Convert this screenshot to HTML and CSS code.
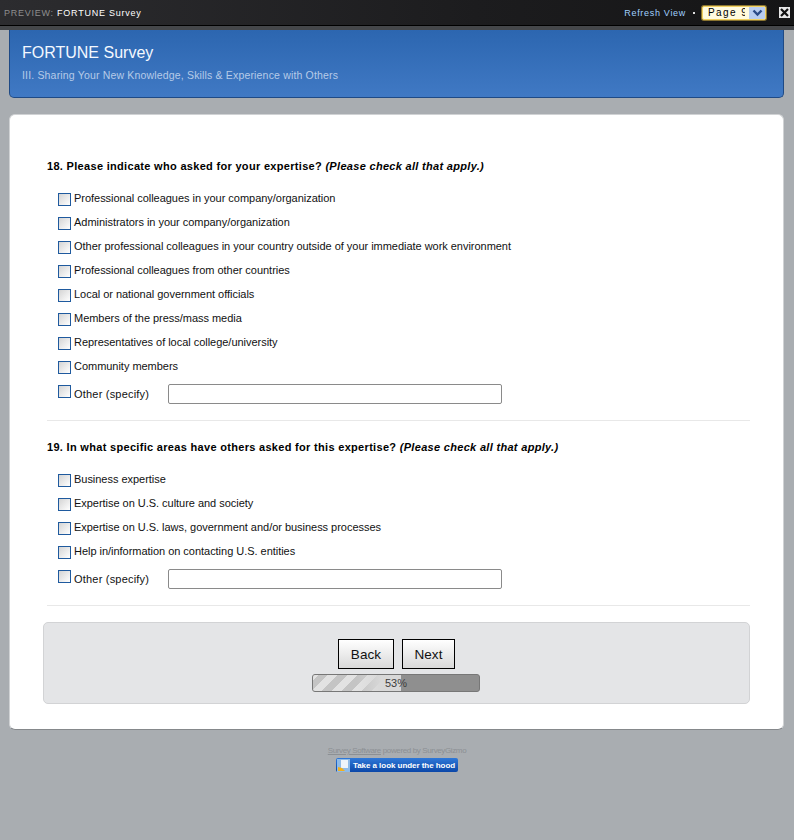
FILE: index.html
```html
<!DOCTYPE html>
<html>
<head>
  <title>FORTUNE Survey</title>
  <meta http-equiv="Content-Type" content="text/html; charset=utf-8" />
  <link rel="stylesheet" href="styles.css">
</head>
<body>
  <div class="preview-bar">
    <div class="preview-title"><span class="preview-label">PREVIEW:</span> FORTUNE Survey</div>
    <div class="preview-tools">
      <a href="#" class="refresh-link">Refresh View</a>
      <span class="dot"></span>
      <div class="page-select">
        <span class="page-text">Page 9</span>
        <span class="page-arrow">
          <svg width="11" height="8" viewBox="0 0 11 8"><path d="M1.5 1.5 L5.5 5.5 L9.5 1.5" fill="none" stroke="#2b4a86" stroke-width="2.4"/></svg>
        </span>
      </div>
      <span class="close-btn">
        <svg width="9" height="9" viewBox="0 0 9 9"><path d="M1 1 L8 8 M8 1 L1 8" fill="none" stroke="#111" stroke-width="2.2"/></svg>
      </span>
    </div>
  </div>

  <div class="survey-header">
    <h1>FORTUNE Survey</h1>
    <p>III. Sharing Your New Knowledge, Skills &amp; Experience with Others</p>
  </div>

  <div class="survey-card">
    <div class="question">
      <h2>18. Please indicate who asked for your expertise? <em>(Please check all that apply.)</em></h2>
      <label class="option"><span class="box"></span>Professional colleagues in your company/organization</label>
      <label class="option"><span class="box"></span>Administrators in your company/organization</label>
      <label class="option"><span class="box"></span>Other professional colleagues in your country outside of your immediate work environment</label>
      <label class="option"><span class="box"></span>Professional colleagues from other countries</label>
      <label class="option"><span class="box"></span>Local or national government officials</label>
      <label class="option"><span class="box"></span>Members of the press/mass media</label>
      <label class="option"><span class="box"></span>Representatives of local college/university</label>
      <label class="option"><span class="box"></span>Community members</label>
      <div class="option other"><span class="box"></span><span class="other-label">Other (specify)</span><input type="text" class="other-input"></div>
    </div>

    <div class="question">
      <h2>19. In what specific areas have others asked for this expertise? <em>(Please check all that apply.)</em></h2>
      <label class="option"><span class="box"></span>Business expertise</label>
      <label class="option"><span class="box"></span>Expertise on U.S. culture and society</label>
      <label class="option"><span class="box"></span>Expertise on U.S. laws, government and/or business processes</label>
      <label class="option"><span class="box"></span>Help in/information on contacting U.S. entities</label>
      <div class="option other"><span class="box"></span><span class="other-label">Other (specify)</span><input type="text" class="other-input"></div>
    </div>

    <div class="nav-panel">
      <div class="nav-buttons">
        <button class="nav-btn back-btn">Back</button>
        <button class="nav-btn next-btn">Next</button>
      </div>
      <div class="progress">
        <div class="progress-fill" style="width: 53%;"></div>
        <span class="progress-text">53%</span>
      </div>
    </div>
  </div>

  <div class="footer">
    <div class="footer-text"><a href="#">Survey Software</a> powered by SurveyGizmo</div>
    <a href="#" class="hood-badge">
      <svg width="13" height="13" viewBox="0 0 13 13"><rect width="13" height="13" fill="#8fbbe8"/><path d="M4 1h7v8H4z" fill="#eef4fb"/><path d="M1 12 L1 8 L5 9 L8 12 Z" fill="#f2b01e"/></svg>
      Take a look under the hood
    </a>
  </div>
</body>
</html>
```

FILE: styles.css
```css
body {
  font-family: "Liberation Sans", Arial, sans-serif;
  font-size: 11px;
  background-color: #a9adb1;
  margin: 0;
  padding: 0;
  color: #111;
}

.preview-bar {
  height: 25px;
  display: flex;
  justify-content: space-between;
  align-items: center;
  padding: 0 4px;
  background: linear-gradient(90deg, #2c2c2f, #1c1c1e 60%, #151516);
  border-bottom: 1px solid #000;
  box-shadow: 0 4px 0 #45474a;
  position: relative;
}

.preview-title {
  font-size: 9px;
  letter-spacing: 0.75px;
  color: #fff;
}

.preview-label {
  color: #8e8e8e;
}

.preview-tools {
  display: flex;
  align-items: center;
}

.refresh-link {
  font-size: 9px;
  letter-spacing: 0.7px;
  color: #a0d0ff;
  text-decoration: none;
}

.dot {
  width: 2px;
  height: 2px;
  background-color: #ddd;
  margin: 0 7px 0 7px;
}

.page-select {
  width: 64px;
  height: 14px;
  display: flex;
  align-items: center;
  justify-content: space-between;
  background-color: #fffbe0;
  border: 1px solid #f0d060;
  box-shadow: 0 0 0 1px #8a7430;
  border-radius: 2px;
  margin-right: 13px;
  padding-left: 5px;
  box-sizing: border-box;
  overflow: hidden;
}

.page-text {
  font-size: 10px;
  letter-spacing: 1.4px;
  color: #000;
  width: 37px;
  overflow: hidden;
  white-space: nowrap;
}

.page-arrow {
  width: 16px;
  height: 12px;
  background-color: #b8cdf0;
  display: flex;
  align-items: center;
  justify-content: center;
}

.close-btn {
  width: 11px;
  height: 11px;
  background-color: #e8e8e8;
  display: flex;
  align-items: center;
  justify-content: center;
}

.survey-header {
  margin: 4px 10px 0 9px;
  height: 68px;
  padding-left: 12px;
  box-sizing: border-box;
  background: linear-gradient(#2c66b0, #4079c4);
  border: 1px solid #1f4a85;
  border-top: none;
  border-radius: 0 0 5px 5px;
  color: #f4f8ff;
}

.survey-header h1 {
  margin: 0;
  padding-top: 14px;
  font-size: 16px;
  font-weight: normal;
}

.survey-header p {
  margin: 7px 0 0;
  font-size: 10.5px;
  letter-spacing: 0.17px;
  color: #b6cbe8;
}

.survey-card {
  margin: 16px 10px 0 9px;
  height: 616px;
  box-sizing: border-box;
  padding: 44px 33px 0 37px;
  background-color: #fff;
  border: 1px solid #d0d2d4;
  border-bottom-color: #85888b;
  border-radius: 6px;
}

.question {
  border-bottom: 1px solid #e8e8e8;
  margin-bottom: 19px;
  padding-bottom: 10px;
}

.question h2 {
  margin: 0 0 13px;
  font-size: 11px;
  line-height: 14px;
  font-weight: bold;
  letter-spacing: 0.31px;
  color: #000;
}

.question h2 em {
  font-style: italic;
}

.option {
  display: flex;
  align-items: center;
  height: 24px;
  padding-left: 11px;
  font-size: 11px;
  letter-spacing: -0.03px;
  color: #111;
}

.option .box {
  width: 13px;
  height: 13px;
  box-sizing: border-box;
  margin-right: 3px;
  flex-shrink: 0;
  background: linear-gradient(135deg, #d4d4d4, #fff);
  border: 1px solid #1f5a9e;
  position: relative;
  top: 1px;
}

.other {
  height: 32px;
}

.other .box {
  top: -3px;
}

.other-label {
  width: 94px;
  letter-spacing: 0.2px;
}

.other-input {
  width: 334px;
  height: 20px;
  box-sizing: border-box;
  border: 1px solid #8a8a8a;
  border-radius: 2px;
  background-color: #fff;
  padding: 0;
}

.nav-panel {
  margin: -3px 0 0 -4px;
  height: 82px;
  box-sizing: border-box;
  padding-top: 16px;
  background-color: #e4e5e7;
  border: 1px solid #d2d3d5;
  border-radius: 5px;
  display: flex;
  flex-direction: column;
  align-items: center;
}

.nav-buttons {
  display: flex;
  justify-content: center;
  gap: 8px;
}

.nav-btn {
  height: 30px;
  padding: 0;
  font-family: "Liberation Sans", Arial, sans-serif;
  font-size: 13.5px;
  letter-spacing: 0.1px;
  color: #111;
  background: linear-gradient(#fff, #d9d9d9);
  border: 1px solid #000;
  border-radius: 0;
}

.back-btn {
  width: 56px;
}

.next-btn {
  width: 53px;
}

.progress {
  width: 168px;
  height: 18px;
  box-sizing: border-box;
  margin: 5px 1px 0 0;
  position: relative;
  background-color: #8f8f8f;
  border: 1px solid #777;
  border-radius: 3px;
  overflow: hidden;
  text-align: center;
  line-height: 16px;
}

.progress-fill {
  height: 100%;
  background:
    linear-gradient(90deg, #d8d8d800 50%, #d8d8d8 78%),
    repeating-linear-gradient(-45deg, #e2e2e2 0, #e2e2e2 7px, #c4c4c4 7px, #c4c4c4 14px);
}

.progress-text {
  position: absolute;
  top: 0;
  left: 0;
  right: 0;
  color: #3c3c3c;
}

.footer {
  text-align: center;
  margin-top: 16px;
}

.footer-text {
  font-size: 8px;
  letter-spacing: -0.37px;
  color: #8c9094;
}

.footer-text a {
  color: #8c9094;
}

.hood-badge {
  display: inline-flex;
  align-items: center;
  gap: 3px;
  height: 14px;
  margin-top: 3px;
  padding: 0 3px 0 1px;
  background: linear-gradient(#2f78d8, #0c47a8);
  color: #fff;
  font-size: 8px;
  font-weight: bold;
  letter-spacing: -0.05px;
  text-decoration: none;
  border-radius: 2px;
}
```
